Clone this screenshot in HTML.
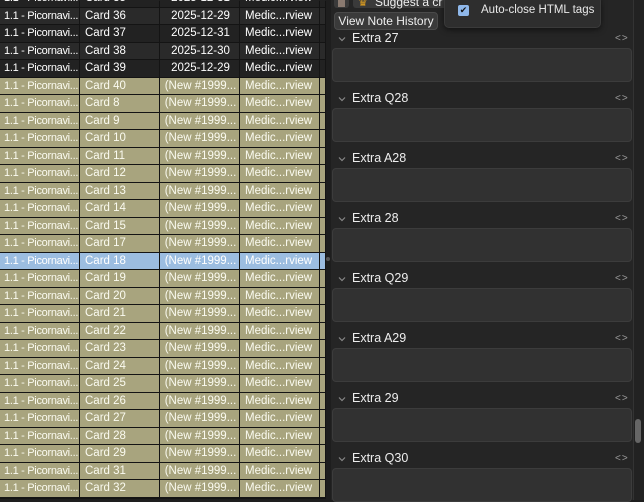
<!DOCTYPE html>
<html><head><style>
*{margin:0;padding:0;box-sizing:border-box}
body{width:644px;height:500px;overflow:hidden;background:#1e1e1e;font-family:"Liberation Sans",sans-serif;position:relative}
.tbl{position:absolute;left:0;top:1px;width:326px;height:498px;background:#141414}
.r{position:absolute;left:0;height:17.5px;width:326px;font-size:11.5px;color:#fff;line-height:17px}
.r div{position:absolute;top:0;height:16.5px;padding-left:5px;white-space:nowrap;overflow:hidden}
.c1{left:0;width:79px;font-size:11px;letter-spacing:-0.3px;padding-left:4px!important}.c2{left:80px;width:79px}.c3{left:160px;width:79px;text-align:center;padding-left:2px!important}.c4{left:240px;width:79px}.c5{left:320px;width:5px;padding:0!important}
.d1 div{background:#2a2a2a}.d2 div{background:#222}
.o div{background:#a8a47e;color:#fbfbf0}
.s div{background:#9cbde0}
.panel{position:absolute;left:331px;top:0;width:313px;height:500px;background:#252525}
.lab{position:absolute;left:352px;font-size:12.5px;color:#eee}
.chev{position:absolute;left:338px;width:8px;height:6px}
.ang{position:absolute;left:615px;font-size:10px;color:#999;letter-spacing:1px}
.box{position:absolute;left:332px;width:300px;height:34px;background:#313131;border:1px solid #3c3c3c;border-radius:4px}
</style></head><body>
<div class="tbl">
<div class="r d2" style="top:-11px"><div class="c1">1.1 - Picornavi...</div><div class="c2">Card 35</div><div class="c3">2025-12-31</div><div class="c4">Medic...rview</div><div class="c5"></div></div>
<div class="r d1" style="top:6.5px"><div class="c1">1.1 - Picornavi...</div><div class="c2">Card 36</div><div class="c3">2025-12-29</div><div class="c4">Medic...rview</div><div class="c5"></div></div>
<div class="r d2" style="top:24px"><div class="c1">1.1 - Picornavi...</div><div class="c2">Card 37</div><div class="c3">2025-12-31</div><div class="c4">Medic...rview</div><div class="c5"></div></div>
<div class="r d1" style="top:41.5px"><div class="c1">1.1 - Picornavi...</div><div class="c2">Card 38</div><div class="c3">2025-12-30</div><div class="c4">Medic...rview</div><div class="c5"></div></div>
<div class="r d2" style="top:59px"><div class="c1">1.1 - Picornavi...</div><div class="c2">Card 39</div><div class="c3">2025-12-29</div><div class="c4">Medic...rview</div><div class="c5"></div></div>
<div class="r o" style="top:76.5px"><div class="c1">1.1 - Picornavi...</div><div class="c2">Card 40</div><div class="c3">(New #1999...</div><div class="c4">Medic...rview</div><div class="c5"></div></div>
<div class="r o" style="top:94px"><div class="c1">1.1 - Picornavi...</div><div class="c2">Card 8</div><div class="c3">(New #1999...</div><div class="c4">Medic...rview</div><div class="c5"></div></div>
<div class="r o" style="top:111.5px"><div class="c1">1.1 - Picornavi...</div><div class="c2">Card 9</div><div class="c3">(New #1999...</div><div class="c4">Medic...rview</div><div class="c5"></div></div>
<div class="r o" style="top:129px"><div class="c1">1.1 - Picornavi...</div><div class="c2">Card 10</div><div class="c3">(New #1999...</div><div class="c4">Medic...rview</div><div class="c5"></div></div>
<div class="r o" style="top:146.5px"><div class="c1">1.1 - Picornavi...</div><div class="c2">Card 11</div><div class="c3">(New #1999...</div><div class="c4">Medic...rview</div><div class="c5"></div></div>
<div class="r o" style="top:164px"><div class="c1">1.1 - Picornavi...</div><div class="c2">Card 12</div><div class="c3">(New #1999...</div><div class="c4">Medic...rview</div><div class="c5"></div></div>
<div class="r o" style="top:181.5px"><div class="c1">1.1 - Picornavi...</div><div class="c2">Card 13</div><div class="c3">(New #1999...</div><div class="c4">Medic...rview</div><div class="c5"></div></div>
<div class="r o" style="top:199px"><div class="c1">1.1 - Picornavi...</div><div class="c2">Card 14</div><div class="c3">(New #1999...</div><div class="c4">Medic...rview</div><div class="c5"></div></div>
<div class="r o" style="top:216.5px"><div class="c1">1.1 - Picornavi...</div><div class="c2">Card 15</div><div class="c3">(New #1999...</div><div class="c4">Medic...rview</div><div class="c5"></div></div>
<div class="r o" style="top:234px"><div class="c1">1.1 - Picornavi...</div><div class="c2">Card 17</div><div class="c3">(New #1999...</div><div class="c4">Medic...rview</div><div class="c5"></div></div>
<div class="r s" style="top:251.5px"><div class="c1">1.1 - Picornavi...</div><div class="c2">Card 18</div><div class="c3">(New #1999...</div><div class="c4">Medic...rview</div><div class="c5"></div></div>
<div class="r o" style="top:269px"><div class="c1">1.1 - Picornavi...</div><div class="c2">Card 19</div><div class="c3">(New #1999...</div><div class="c4">Medic...rview</div><div class="c5"></div></div>
<div class="r o" style="top:286.5px"><div class="c1">1.1 - Picornavi...</div><div class="c2">Card 20</div><div class="c3">(New #1999...</div><div class="c4">Medic...rview</div><div class="c5"></div></div>
<div class="r o" style="top:304px"><div class="c1">1.1 - Picornavi...</div><div class="c2">Card 21</div><div class="c3">(New #1999...</div><div class="c4">Medic...rview</div><div class="c5"></div></div>
<div class="r o" style="top:321.5px"><div class="c1">1.1 - Picornavi...</div><div class="c2">Card 22</div><div class="c3">(New #1999...</div><div class="c4">Medic...rview</div><div class="c5"></div></div>
<div class="r o" style="top:339px"><div class="c1">1.1 - Picornavi...</div><div class="c2">Card 23</div><div class="c3">(New #1999...</div><div class="c4">Medic...rview</div><div class="c5"></div></div>
<div class="r o" style="top:356.5px"><div class="c1">1.1 - Picornavi...</div><div class="c2">Card 24</div><div class="c3">(New #1999...</div><div class="c4">Medic...rview</div><div class="c5"></div></div>
<div class="r o" style="top:374px"><div class="c1">1.1 - Picornavi...</div><div class="c2">Card 25</div><div class="c3">(New #1999...</div><div class="c4">Medic...rview</div><div class="c5"></div></div>
<div class="r o" style="top:391.5px"><div class="c1">1.1 - Picornavi...</div><div class="c2">Card 26</div><div class="c3">(New #1999...</div><div class="c4">Medic...rview</div><div class="c5"></div></div>
<div class="r o" style="top:409px"><div class="c1">1.1 - Picornavi...</div><div class="c2">Card 27</div><div class="c3">(New #1999...</div><div class="c4">Medic...rview</div><div class="c5"></div></div>
<div class="r o" style="top:426.5px"><div class="c1">1.1 - Picornavi...</div><div class="c2">Card 28</div><div class="c3">(New #1999...</div><div class="c4">Medic...rview</div><div class="c5"></div></div>
<div class="r o" style="top:444px"><div class="c1">1.1 - Picornavi...</div><div class="c2">Card 29</div><div class="c3">(New #1999...</div><div class="c4">Medic...rview</div><div class="c5"></div></div>
<div class="r o" style="top:461.5px"><div class="c1">1.1 - Picornavi...</div><div class="c2">Card 31</div><div class="c3">(New #1999...</div><div class="c4">Medic...rview</div><div class="c5"></div></div>
<div class="r o" style="top:479px"><div class="c1">1.1 - Picornavi...</div><div class="c2">Card 32</div><div class="c3">(New #1999...</div><div class="c4">Medic...rview</div><div class="c5"></div></div>
</div>
<div class="panel"></div>
<div style="position:absolute;left:326px;top:257px;width:4px;height:4px;border-radius:2px;background:#555"></div>
<div style="position:absolute;left:334px;top:-4px;width:15px;height:12px;background:#3a3a3a;border-radius:3px"><div style="position:absolute;left:4px;top:3px;width:7px;height:8px;background:#8a7a70"></div></div>
<div style="position:absolute;left:353px;top:-6px;width:100px;height:14px;background:#3a3a3a;border-radius:3px;font-size:12px;color:#eee;padding-left:22px;line-height:16px">Suggest a cr<span style="position:absolute;left:5px;top:1px;color:#e0a020;font-size:11px">♛</span></div>
<div style="position:absolute;left:334px;top:12px;width:104px;height:18px;background:#3a3a3a;border:1px solid #4a4a4a;border-radius:4px;font-size:12px;color:#eee;text-align:center;line-height:16px">View Note History</div>
<div style="position:absolute;left:444px;top:-4px;width:157px;height:32px;background:#2e2e2e;border:1px solid #3a3a3a;border-radius:5px;box-shadow:0 2px 6px rgba(0,0,0,.5)">
<div style="position:absolute;left:13px;top:8px;width:11px;height:11px;background:#8fb8ea;border-radius:2px;color:#111;font-size:9px;line-height:11px;text-align:center">✔</div>
<div style="position:absolute;left:36px;top:7px;font-size:11.5px;color:#e8e8e8">Auto-close HTML tags</div>
</div>
<svg class="chev" style="top:36px" viewBox="0 0 8 6"><path d="M1 1.5L4 4.5L7 1.5" fill="none" stroke="#888" stroke-width="1.2"/></svg><span class="lab" style="top:31px">Extra 27</span><span class="ang" style="top:33px">&lt;&gt;</span><div class="box" style="top:48px"></div>
<svg class="chev" style="top:96px" viewBox="0 0 8 6"><path d="M1 1.5L4 4.5L7 1.5" fill="none" stroke="#888" stroke-width="1.2"/></svg><span class="lab" style="top:91px">Extra Q28</span><span class="ang" style="top:93px">&lt;&gt;</span><div class="box" style="top:108px"></div>
<svg class="chev" style="top:156px" viewBox="0 0 8 6"><path d="M1 1.5L4 4.5L7 1.5" fill="none" stroke="#888" stroke-width="1.2"/></svg><span class="lab" style="top:151px">Extra A28</span><span class="ang" style="top:153px">&lt;&gt;</span><div class="box" style="top:168px"></div>
<svg class="chev" style="top:216px" viewBox="0 0 8 6"><path d="M1 1.5L4 4.5L7 1.5" fill="none" stroke="#888" stroke-width="1.2"/></svg><span class="lab" style="top:211px">Extra 28</span><span class="ang" style="top:213px">&lt;&gt;</span><div class="box" style="top:228px"></div>
<svg class="chev" style="top:276px" viewBox="0 0 8 6"><path d="M1 1.5L4 4.5L7 1.5" fill="none" stroke="#888" stroke-width="1.2"/></svg><span class="lab" style="top:271px">Extra Q29</span><span class="ang" style="top:273px">&lt;&gt;</span><div class="box" style="top:288px"></div>
<svg class="chev" style="top:336px" viewBox="0 0 8 6"><path d="M1 1.5L4 4.5L7 1.5" fill="none" stroke="#888" stroke-width="1.2"/></svg><span class="lab" style="top:331px">Extra A29</span><span class="ang" style="top:333px">&lt;&gt;</span><div class="box" style="top:348px"></div>
<svg class="chev" style="top:396px" viewBox="0 0 8 6"><path d="M1 1.5L4 4.5L7 1.5" fill="none" stroke="#888" stroke-width="1.2"/></svg><span class="lab" style="top:391px">Extra 29</span><span class="ang" style="top:393px">&lt;&gt;</span><div class="box" style="top:408px"></div>
<svg class="chev" style="top:456px" viewBox="0 0 8 6"><path d="M1 1.5L4 4.5L7 1.5" fill="none" stroke="#888" stroke-width="1.2"/></svg><span class="lab" style="top:451px">Extra Q30</span><span class="ang" style="top:453px">&lt;&gt;</span><div class="box" style="top:468px"></div>
<div style="position:absolute;left:633px;top:0;width:11px;height:500px;background:#222;border-left:1px solid #333"></div>
<div style="position:absolute;left:635px;top:419px;width:6px;height:24px;background:#666;border-radius:3px"></div>
</body></html>
